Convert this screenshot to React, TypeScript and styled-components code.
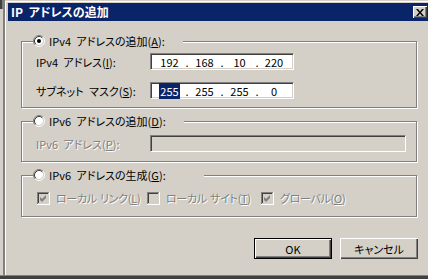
import React from 'react';
import styled, { createGlobalStyle } from 'styled-components';

const GlobalStyle = createGlobalStyle`
	html, body {
		margin: 0;
		padding: 0;
		background: #d4d0c8;
	}
	body {
		font-family: "Noto Sans CJK JP", "Noto Sans", sans-serif;
		font-size: 11px;
		font-feature-settings: "palt";
		word-spacing: 3px;
		color: #000;
	}
`;

const Screen = styled.div`
	width: 428px;
	height: 279px;
	display: flex;
	flex-direction: column;
	background: #d4d0c8;
	overflow: hidden;
`;

const Desk = styled.div`
	display: flex;
	flex: 1;
	min-height: 0;
`;

const EdgeStrip = styled.div`
	width: 3px;
	flex: none;
	background: #d4d0c8;
`;

const EdgeKnob = styled.div`
	height: 9px;
	background: #404040;
	border-right: 1px solid #808080;
	box-sizing: border-box;
`;

const Frame = styled.div`
	flex: 1;
	display: flex;
	border-left: 2px solid #808080;
	padding-top: 1px;
`;

const FrameInner = styled.div`
	flex: 1;
	display: flex;
	flex-direction: column;
	border-left: 1px solid #fff;
	border-top: 1px solid #fff;
	padding: 1px 0 0 2px;
`;

const BottomEdge = styled.div`
	height: 3px;
	flex: none;
	border-top: 1px solid #808080;
	background: #404040;
`;

const TitleBar = styled.div`
	height: 18px;
	display: flex;
	align-items: center;
	justify-content: space-between;
	background: #0a246a;
	padding-left: 3px;
`;

const Title = styled.span`
	color: #fff;
	font-weight: bold;
	font-size: 12px;
	line-height: 18px;
`;

const CloseButton = styled.div`
	width: 14px;
	height: 12px;
	margin-right: 1px;
	box-sizing: border-box;
	background: #d4d0c8;
	box-shadow: inset 1px 1px #fff, inset -1px -1px #404040, inset -2px -2px #808080;
	display: flex;
	align-items: center;
	justify-content: center;
`;

const Body = styled.div`
	display: flex;
	flex-direction: column;
	padding: 20px 0 0 13px;
`;

const Group = styled.div<{ $top: number; $bottom: number; $left: number }>`
	width: 396px;
	box-sizing: border-box;
	margin-top: ${p => p.$top}px;
	border: 1px solid #808080;
	box-shadow: inset 1px 1px #fff, 1px 1px #fff;
	padding: 0 0 ${p => p.$bottom}px ${p => p.$left}px;
`;

const Legend = styled.div<{ $width: number; $shift: number }>`
	width: ${p => p.$width}px;
	height: 14px;
	margin: -8px 0 0 ${p => -p.$shift}px;
	display: flex;
	align-items: center;
	gap: 4px;
	background: #d4d0c8;
`;

const Label = styled.span<{ $disabled?: boolean }>`
	white-space: nowrap;
	line-height: 14px;
	color: ${p => (p.$disabled ? '#808080' : '#000')};
	text-shadow: ${p => (p.$disabled ? '1px 1px 0 #fff' : 'none')};
`;

const FieldGrid = styled.div<{ $top: number; $gap: number }>`
	display: grid;
	grid-template-columns: 114px auto;
	row-gap: ${p => p.$gap}px;
	align-items: center;
	margin-top: ${p => p.$top}px;
`;

const Edit = styled.div<{ $width: number; $disabled?: boolean; $pad?: number }>`
	width: ${p => p.$width}px;
	height: 17px;
	box-sizing: border-box;
	display: flex;
	align-items: center;
	padding-left: ${p => p.$pad || 0}px;
	background: ${p => (p.$disabled ? '#d4d0c8' : '#fff')};
	border-top: 1px solid #808080;
	border-left: 1px solid #808080;
	border-bottom: 1px solid #fff;
	border-right: 1px solid #fff;
	box-shadow: inset 1px 1px #404040, inset -1px -1px #d4d0c8;
`;

const Seg = styled.span<{ $width: number }>`
	width: ${p => p.$width}px;
	text-align: center;
	line-height: 14px;
`;

const Dot = styled.span`
	width: 8px;
	text-align: center;
	line-height: 14px;
`;

const Selected = styled.span`
	background: #0a246a;
	color: #fff;
	padding: 0 1px;
`;

const CheckRow = styled.div`
	display: flex;
	align-items: center;
	margin-top: 9px;
`;

const CheckItem = styled.div<{ $width?: number }>`
	display: flex;
	align-items: center;
	gap: 6px;
	width: ${p => (p.$width ? `${p.$width}px` : 'auto')};
	word-spacing: 1px;
	letter-spacing: -0.3px;
`;

const ButtonRow = styled.div`
	width: 397px;
	display: flex;
	justify-content: flex-end;
	gap: 8px;
	margin-top: 21px;
`;

const Button = styled.div<{ $default?: boolean }>`
	width: 78px;
	height: 21px;
	box-sizing: border-box;
	display: flex;
	align-items: center;
	justify-content: center;
	background: #d4d0c8;
	border: ${p => (p.$default ? '1px solid #000' : 'none')};
	box-shadow: inset 1px 1px #fff, inset -1px -1px #404040, inset -2px -2px #808080;
`;

const Radio = ({ checked }: { checked?: boolean }) => (
	<svg width="12" height="12" viewBox="0 0 12 12" style={{ flex: 'none' }}>
		<circle cx="6" cy="6" r="4" fill="#fff" />
		<path d="M2.11 9.89 A5.5 5.5 0 0 1 9.89 2.11" fill="none" stroke="#808080" />
		<path d="M9.89 2.11 A5.5 5.5 0 0 1 2.11 9.89" fill="none" stroke="#fff" />
		<path d="M2.82 9.18 A4.5 4.5 0 0 1 9.18 2.82" fill="none" stroke="#404040" />
		<path d="M9.18 2.82 A4.5 4.5 0 0 1 2.82 9.18" fill="none" stroke="#d4d0c8" />
		{checked && <circle cx="6" cy="6" r="2" fill="#000" />}
	</svg>
);

const Check = ({ checked }: { checked?: boolean }) => (
	<svg width="13" height="13" viewBox="0 0 13 13" style={{ flex: 'none' }}>
		<rect x="0" y="0" width="13" height="13" fill="#fff" />
		<rect x="0" y="0" width="12" height="12" fill="#808080" />
		<rect x="1" y="1" width="11" height="11" fill="#d4d0c8" />
		<rect x="1" y="1" width="10" height="10" fill="#404040" />
		<rect x="2" y="2" width="9" height="9" fill="#d4d0c8" />
		{checked && <path d="M3 5 L5 7 L9 3 L9 6 L5 10 L3 8 Z" fill="#808080" />}
	</svg>
);

const CloseGlyph = () => (
	<svg width="8" height="7" viewBox="0 0 8 7">
		<path d="M0 0 L2 0 L4 2.5 L6 0 L8 0 L5 3.5 L8 7 L6 7 L4 4.5 L2 7 L0 7 L3 3.5 Z" fill="#000" />
	</svg>
);

type IpProps = {
	parts: string[];
	selectFirst?: boolean;
};

const IpField = (props: IpProps) => {
	const cells: React.ReactNode[] = [];
	props.parts.forEach((part, i) => {
		if (i > 0) cells.push(<Dot key={`d${i}`}>.</Dot>);
		const content = i === 0 && props.selectFirst ? <Selected>{part}</Selected> : part;
		cells.push(<Seg key={`s${i}`} $width={i === 3 ? 26 : 27}>{content}</Seg>);
	});
	return <Edit $width={144} $pad={5}>{cells}</Edit>;
};

export default function App() {
	return (
		<Screen>
			<GlobalStyle />
			<Desk>
				<EdgeStrip>
					<EdgeKnob />
				</EdgeStrip>
				<Frame>
					<FrameInner>
						<TitleBar>
							<Title>IP アドレスの追加</Title>
							<CloseButton><CloseGlyph /></CloseButton>
						</TitleBar>
						<Body>
							<Group $top={0} $bottom={8} $left={14}>
								<Legend $width={150} $shift={3}>
									<Radio checked />
									<Label>IPv4 アドレスの追加(<u>A</u>):</Label>
								</Legend>
								<FieldGrid $top={5} $gap={12}>
									<Label>IPv4 アドレス(<u>I</u>):</Label>
									<IpField parts={['192', '168', '10', '220']} />
									<Label>サブネット マスク(<u>S</u>):</Label>
									<IpField parts={['255', '255', '255', '0']} selectFirst />
								</FieldGrid>
							</Group>

							<Group $top={13} $bottom={9} $left={14}>
								<Legend $width={151} $shift={3}>
									<Radio />
									<Label>IPv6 アドレスの追加(<u>D</u>):</Label>
								</Legend>
								<FieldGrid $top={7} $gap={0}>
									<Label $disabled>IPv6 アドレス(<u>P</u>):</Label>
									<Edit $width={256} $disabled />
								</FieldGrid>
							</Group>

							<Group $top={13} $bottom={11} $left={15}>
								<Legend $width={171} $shift={4}>
									<Radio />
									<Label>IPv6 アドレスの生成(<u>G</u>):</Label>
								</Legend>
								<CheckRow>
									<CheckItem $width={110}>
										<Check checked />
										<Label $disabled>ローカル リンク(<u>L</u>)</Label>
									</CheckItem>
									<CheckItem $width={114}>
										<Check />
										<Label $disabled>ローカル サイト(<u>T</u>)</Label>
									</CheckItem>
									<CheckItem>
										<Check checked />
										<Label $disabled>グローバル(<u>O</u>)</Label>
									</CheckItem>
								</CheckRow>
							</Group>

							<ButtonRow>
								<Button $default>OK</Button>
								<Button>キャンセル</Button>
							</ButtonRow>
						</Body>
					</FrameInner>
				</Frame>
			</Desk>
			<BottomEdge />
		</Screen>
	);
}
